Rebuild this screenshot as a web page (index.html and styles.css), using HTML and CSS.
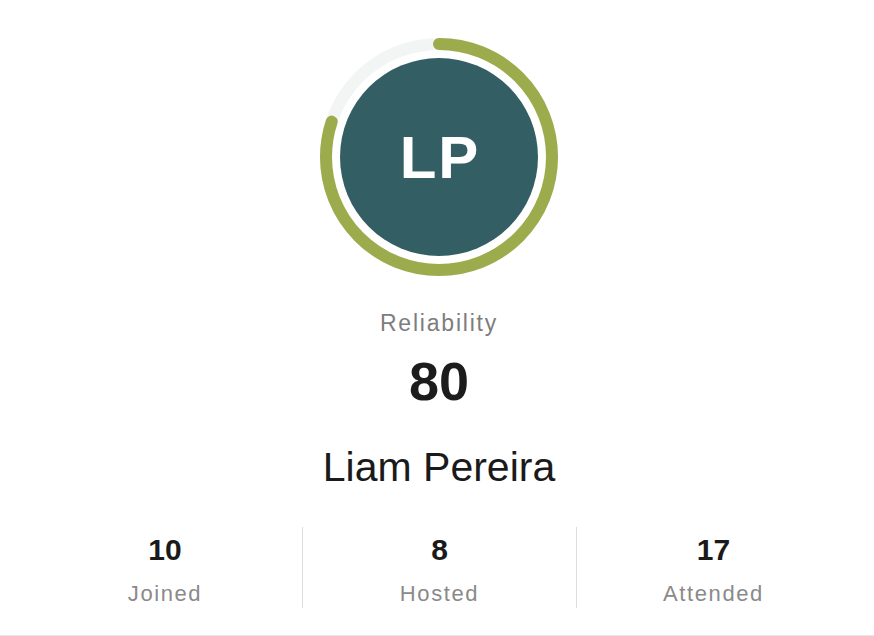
FILE: index.html
```html
<!DOCTYPE html>
<html lang="en">
<head>
  <meta charset="UTF-8" />
  <meta name="viewport" content="width=device-width, initial-scale=1.0"/>
  <title>Profile - Liam Pereira</title>
  <link rel="stylesheet" href="styles.css">
</head>
<body>

  <main class="profile">
    <div class="ring">
      <svg class="ring-svg" width="240" height="240" viewBox="0 0 240 240">
        <circle class="ring-track" cx="120" cy="120" r="113" />
        <!-- 80% of 2*pi*113 = 568 -->
        <circle class="ring-fill" cx="120" cy="120" r="113"
                stroke-dasharray="568 710" transform="rotate(-90 120 120)" />
      </svg>
      <div class="avatar">LP</div>
    </div>

    <p class="reliability-label">Reliability</p>
    <p class="reliability-score">80</p>

    <h1 class="name">Liam Pereira</h1>

    <div class="stats">
      <div class="stat">
        <div class="stat-value">10</div>
        <div class="stat-label">Joined</div>
      </div>
      <div class="stat">
        <div class="stat-value">8</div>
        <div class="stat-label">Hosted</div>
      </div>
      <div class="stat">
        <div class="stat-value">17</div>
        <div class="stat-label">Attended</div>
      </div>
    </div>
  </main>

</body>
</html>
```

FILE: styles.css
```css
body {
  margin: 0;
  padding: 0;
  background: #ffffff;
  color: #1a1a1a;
  font-family: 'Liberation Sans', Arial, sans-serif;
}

.profile {
  display: flex;
  flex-direction: column;
  align-items: center;
  text-align: center;
  height: 598px;
  padding: 37px 24px 0 28px;
  border-bottom: 1px solid #e6e6e6;
}

.ring {
  display: grid;
  place-items: center;
  width: 240px;
  height: 240px;
}

.ring-svg,
.avatar {
  grid-area: 1 / 1;
}

.ring-track {
  fill: none;
  stroke: #f3f5f5;
  stroke-width: 12;
}

.ring-fill {
  fill: none;
  stroke: #9cab4c;
  stroke-width: 12;
  stroke-linecap: round;
}

.avatar {
  width: 198px;
  height: 198px;
  border-radius: 50%;
  background-color: #335e64;
  color: #ffffff;
  display: flex;
  align-items: center;
  justify-content: center;
  font-size: 60px;
  font-weight: bold;
  letter-spacing: 2px;
  text-indent: 2px;
}

.reliability-label {
  margin: 32px 0 0;
  font-size: 23px;
  line-height: 28px;
  letter-spacing: 1.8px;
  color: #7d7d7d;
}

.reliability-score {
  margin: 14px 0 0;
  font-size: 54px;
  line-height: 60px;
  font-weight: bold;
  color: #1c1c1c;
}

.name {
  margin: 32px 0 0;
  font-size: 41px;
  line-height: 48px;
  font-weight: normal;
  color: #1a1a1a;
}

.stats {
  display: grid;
  grid-template-columns: repeat(3, 1fr);
  width: 100%;
  margin-top: 36px;
}

.stat {
  padding-top: 5px;
}

.stat + .stat {
  border-left: 1px solid #dcdcdc;
}

.stat-value {
  font-size: 30px;
  line-height: 36px;
  font-weight: bold;
  color: #1a1a1a;
}

.stat-label {
  margin-top: 12px;
  font-size: 22px;
  line-height: 28px;
  letter-spacing: 1.6px;
  color: #8a8a8a;
}
```
